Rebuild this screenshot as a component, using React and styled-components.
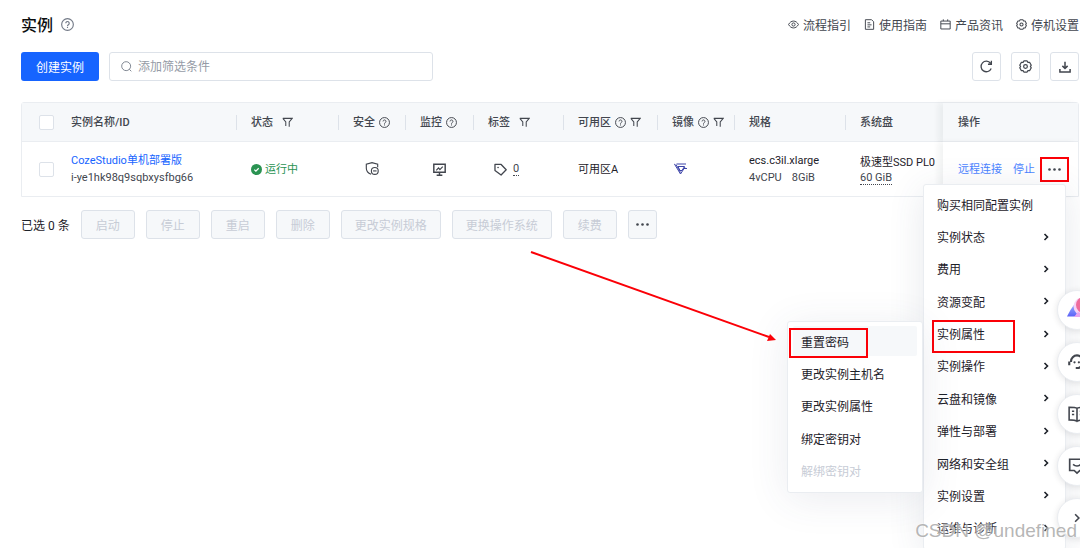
import React from "react";
import styled, { createGlobalStyle } from "styled-components";

const GlobalStyle = createGlobalStyle`
  * {
    box-sizing: border-box;
  }

  body {
    margin: 0;
    background: #fff;
  }

  body,
  button,
  input {
    font-family: Roboto, "Noto Sans CJK SC", sans-serif;
    font-size: 12px;
  }
`;

const Page = styled.div`
  position: relative;
  min-height: 100vh;
  padding: 10px 1px 0 21px;
  overflow: hidden;
  color: #1d2129;
`;

const TopBar = styled.header`
  display: flex;
  align-items: center;
  justify-content: space-between;
  height: 28px;
`;

const Title = styled.h1`
  display: flex;
  align-items: center;
  gap: 8px;
  margin: 0;
  font-size: 16px;
  font-weight: 500;
  color: #0c0d0e;

  svg {
    color: #737a87;
  }
`;

const TopLinks = styled.nav`
  display: flex;
  gap: 13px;
`;

const TopLink = styled.a`
  display: flex;
  align-items: center;
  gap: 4px;
  color: #42464e;
  text-decoration: none;
`;

const Toolbar = styled.div`
  display: flex;
  align-items: center;
  gap: 10px;
  margin: 14px 0 21px;
`;

const PrimaryButton = styled.button`
  height: 29px;
  padding: 0 15px 1px;
  border: 0;
  border-radius: 3px;
  background: #1664ff;
  color: #fff;
`;

const SearchBox = styled.label`
  display: flex;
  align-items: center;
  gap: 6px;
  flex: 0 1 324px;
  height: 29px;
  padding: 0 11px;
  border: 1px solid #dde2e9;
  border-radius: 3px;
  color: #737a87;

  input {
    flex: 1;
    min-width: 0;
    padding: 0;
    border: 0;
    outline: 0;
    background: none;
  }

  input::placeholder {
    color: #959ba6;
  }
`;

const ToolbarRight = styled.div`
  display: flex;
  gap: 10px;
  margin-left: auto;
`;

const IconButton = styled.button`
  display: flex;
  align-items: center;
  justify-content: center;
  width: 29px;
  height: 29px;
  padding: 0;
  border: 1px solid #dde2e9;
  border-radius: 3px;
  background: ${(p) => (p.$filled ? "#f6f8fa" : "#fff")};
  color: #42464e;
`;

const Table = styled.table`
  width: 100%;
  table-layout: fixed;
  border: 1px solid #eaedf1;
  border-radius: 3px 3px 0 0;
  border-spacing: 0;
  font-size: 11px;
  line-height: 17px;
`;

const Col = styled.col`
  width: ${(p) => p.$width}px;
`;

const Th = styled.th`
  position: relative;
  height: 39px;
  padding: 0 0 0 15px;
  border-bottom: 1px solid #eaedf1;
  background: #f6f8fa;
  color: #42464e;
  font-weight: 500;
  text-align: left;
  white-space: nowrap;

  &:nth-child(n + 3):not(:last-child)::before {
    content: "";
    position: absolute;
    left: 0;
    top: 12px;
    height: 15px;
    border-left: 1px solid #dde2e9;
  }

  &:first-child {
    padding-left: 17px;
  }

  &:last-child {
    box-shadow: -5px 0 6px rgba(29, 33, 41, 0.05);
  }
`;

const HeadLabel = styled.span`
  display: flex;
  align-items: center;
  gap: ${(p) => p.$gap || 4}px;
`;

const Td = styled.td`
  position: relative;
  height: 54px;
  padding: 0 0 0 15px;
  background: #fff;
  white-space: nowrap;

  &:first-child {
    padding-left: 17px;
  }

  &:last-child {
    box-shadow: -5px 0 6px rgba(29, 33, 41, 0.05);
  }
`;

const Checkbox = styled.input`
  display: block;
  appearance: none;
  width: 15px;
  height: 15px;
  margin: 0;
  border: 1px solid #dde2e9;
  border-radius: 2px;
  background: #fff;
`;

const Link = styled.a`
  color: #1664ff;
  text-decoration: none;
  opacity: ${(p) => (p.$soft ? 0.8 : 1)};
`;

const SubLine = styled.div`
  display: flex;
  gap: 10px;
  color: #42464e;
`;

const Dotted = styled.span`
  border-bottom: 1px dotted #42464e;
  line-height: 13px;
`;

const Status = styled.span`
  display: flex;
  align-items: center;
  gap: 3px;
  color: #2a9352;
`;

const Centered = styled.span`
  display: flex;
  align-items: center;
  gap: 6px;
  padding-left: ${(p) => p.$indent || 0}px;
  color: #42464e;
`;

const Actions = styled.div`
  display: flex;
  align-items: center;
  gap: 11px;
`;

const MoreButton = styled.button`
  display: flex;
  align-items: center;
  justify-content: center;
  width: 29px;
  height: 25px;
  margin-left: -6px;
  padding: 0;
  border: 2px solid #fb0007;
  background: none;
  color: #42464e;
`;

const BatchBar = styled.div`
  display: flex;
  align-items: center;
  gap: 11px;
  margin-top: 13px;
`;

const BatchLabel = styled.span`
  flex: 0 0 47px;
  padding-bottom: 1px;
  white-space: nowrap;
`;

const BatchButton = styled.button`
  min-width: 54px;
  height: 29px;
  padding: 0 13px 1px;
  border: 1px solid #dde2e9;
  border-radius: 3px;
  background: #f6f8fa;
  color: #c7ccd6;
`;

const Panel = styled.div`
  position: absolute;
  display: grid;
  grid-auto-rows: 1fr;
  padding: 3px 5px 5px;
  border: 1px solid #eaedf1;
  border-radius: 3px;
  background: #fff;
`;

const Menu = styled(Panel)`
  top: 184px;
  right: 14px;
  width: 143px;
  height: 366px;
  box-shadow: 0 6px 36px rgba(60, 72, 110, 0.12);
`;

const SubMenu = styled(Panel)`
  top: 136px;
  right: 100%;
  width: 136px;
  height: 172px;
  margin-right: 1px;
  box-shadow: 0 6px 40px rgba(60, 72, 110, 0.1);
`;

const MenuItem = styled.button`
  position: relative;
  display: flex;
  align-items: center;
  justify-content: space-between;
  min-height: 0;
  margin: 1px 0;
  padding: 0 10px 0 8px;
  border: 0;
  border-radius: 2px;
  background: ${(p) => (p.$hover ? "#f6f8fa" : "none")};
  color: #1d2129;
  text-align: left;
  white-space: nowrap;

  &:disabled {
    color: #c7ccd6;
  }
`;

const Highlight = styled.span`
  position: absolute;
  left: ${(p) => p.$left}px;
  top: 2px;
  width: ${(p) => p.$width}px;
  height: ${(p) => p.$height}px;
  border: 2px solid #fb0007;
`;

const Arrow = styled.svg`
  position: absolute;
  left: 530px;
  top: 250px;
`;

const Floats = styled.aside`
  position: absolute;
  top: 290px;
  right: -17px;
  display: grid;
  gap: 12px;
`;

const FloatButton = styled.button`
  display: flex;
  align-items: center;
  justify-content: center;
  width: 40px;
  height: 40px;
  padding: 0;
  border: 1px solid #eaedf1;
  border-radius: 50%;
  background: #fff;
  box-shadow: 0 1px 6px rgba(29, 33, 41, 0.12);
  color: #42464e;
`;

const Watermark = styled.div`
  position: absolute;
  right: 3px;
  bottom: 5px;
  font: 19px/24px "Liberation Sans", sans-serif;
  color: rgba(150, 150, 150, 0.7);
  text-shadow: 0 0 2px #fff;
  pointer-events: none;
`;

const Svg = ({ size = 12, width = 1.2, children }) => (
  <svg
    width={size}
    height={size}
    viewBox="0 0 16 16"
    fill="none"
    stroke="currentColor"
    strokeWidth={width}
    aria-hidden="true"
  >
    {children}
  </svg>
);

const HelpIcon = ({ size = 11 }) => (
  <Svg size={size} width={1.4}>
    <circle cx="8" cy="8" r="7.2" />
    <path d="M5.9 6.4a2.1 2.1 0 1 1 3.2 1.8c-.8.5-1.1.8-1.1 1.6M8 10.8v1.5" />
  </Svg>
);

const FilterIcon = () => (
  <Svg size={11} width={1.5}>
    <path d="M1.2 2h13.6l-4.300 5.200V14M1.2 2l4.300 5.200V13" />
  </Svg>
);

const EyeIcon = () => (
  <Svg size={11} width={1.4}>
    <path d="M.8 8C2.6 4.8 5 3 8 3s5.400 1.800 7.200 5c-1.800 3.200-4.200 5-7.200 5S2.600 11.200.8 8z" />
    <circle cx="8" cy="8" r="2.300" />
  </Svg>
);

const DocIcon = () => (
  <Svg size={11} width={1.4}>
    <path d="M2 1h9l3 3v11H2zM5 5.500h4M5 8.500h6M5 11.500h4" />
  </Svg>
);

const CalendarIcon = () => (
  <Svg size={11} width={1.4}>
    <path d="M1.200 3h13.600v11.500H1.200zM1.200 7h13.600M4.800.5V3M11.200.5V3" />
  </Svg>
);

const GearIcon = ({ size = 11 }) => (
  <Svg size={size} width={1.5}>
    <path
      strokeLinejoin="round"
      d="M6 1.200h4l1 1.700 2.200.1 1.900 3.400L14 8l1.100 1.600-1.900 3.400-2.200.1-1 1.700H6l-1-1.700-2.200-.1L.9 9.600 2 8 .9 6.400 2.800 3 5 2.900z"
    />
    <circle cx="8" cy="8" r="2.300" />
  </Svg>
);

const SearchIcon = () => (
  <Svg size={11} width={1.3}>
    <circle cx="7.500" cy="7.500" r="6.500" />
    <path d="M12 12l3 3" />
  </Svg>
);

const RefreshIcon = () => (
  <Svg size={13} width={1.6}>
    <path d="M13.800 10.500A6.500 6.500 0 1 1 13 4M14 1v4.200H9.800" />
  </Svg>
);

const DownloadIcon = () => (
  <Svg size={12} width={2}>
    <path d="M8 1v8.500M4.500 6.500L8 10l3.500-3.500M1.200 10.500v4h13.600v-4" />
  </Svg>
);

const DotsIcon = () => (
  <svg width="13" height="3" viewBox="0 0 13 3" fill="currentColor" aria-hidden="true">
    <circle cx="1.500" cy="1.500" r="1.300" />
    <circle cx="6.500" cy="1.500" r="1.300" />
    <circle cx="11.500" cy="1.500" r="1.300" />
  </svg>
);

const CheckIcon = () => (
  <svg width="11" height="11" viewBox="0 0 16 16" aria-hidden="true">
    <circle cx="8" cy="8" r="8" fill="#2a9352" />
    <path d="M4.800 8.200l2.300 2.200 4.100-4.200" fill="none" stroke="#fff" strokeWidth="1.8" />
  </svg>
);

const ShieldIcon = () => (
  <Svg size={14} width={1.3}>
    <path d="M7 14C3.500 12.500 1.500 10.500 1.500 7V2.500L8 .8l6.500 1.700V6" />
    <circle cx="11.200" cy="10.200" r="3.900" />
    <path d="M9.200 10.200h4" />
  </Svg>
);

const MonitorIcon = () => (
  <Svg size={13} width={1.8}>
    <path d="M1 1.500h14v10H1zM8 11.500V15M4.500 15h7" />
    <path strokeWidth="1.5" d="M4 9l2.800-3 1.700 2.200L12 4.500" />
  </Svg>
);

const TagIcon = () => (
  <Svg size={13} width={1.6}>
    <path strokeLinejoin="round" d="M1.200 1.800h7.600L15 8.300l-6.300 6.500-7.500-5.500z" />
    <circle cx="5" cy="5.500" r="1" fill="currentColor" stroke="none" />
  </Svg>
);

const ImageLogo = () => (
  <svg width="13" height="12" viewBox="0 0 13 12" fill="none" stroke="#3c44a8" aria-hidden="true">
    <path d="M2.500 1h9.500M.3.800L6.500 11 11 4M2 1.500l4.500 8M4 3.500h6.500L8 7.500H6L4 3.500M9.500 5.500H13" />
  </svg>
);

const ChevronIcon = ({ size = 8, width = 3.2 }) => (
  <Svg size={size} width={width}>
    <path d="M5 2l6 6-6 6" />
  </Svg>
);

const PrismIcon = () => (
  <svg width="24" height="24" viewBox="0 0 24 24" aria-hidden="true">
    <defs>
      <linearGradient id="prism" x1="0" y1="1" x2="0" y2="0">
        <stop offset="0" stopColor="#5c62f7" />
        <stop offset="1" stopColor="#9db8ff" />
      </linearGradient>
    </defs>
    <path d="M2 18.500h9L14 8l-3-3C9 6 4 14 2 18.500z" fill="url(#prism)" />
    <circle cx="17.500" cy="8.500" r="9" fill="#f7d3f5" />
    <circle cx="19" cy="7" r="8" fill="#ef6c9b" />
    <path d="M9 19l4-5 9 5z" fill="#e9a5ee" />
  </svg>
);

const HeadsetIcon = () => (
  <Svg size={20} width={1.7}>
    <path d="M3.200 8V7.500a4.800 4.800 0 0 1 9.600 0V8M1.800 7.500v3M14.200 7.500v3M7 12.800h2.500l3.300-2" />
    <circle cx="6" cy="8.200" r=".9" fill="currentColor" stroke="none" />
    <circle cx="9.500" cy="8.200" r=".9" fill="currentColor" stroke="none" />
  </Svg>
);

const BookIcon = () => (
  <Svg size={18} width={1.4}>
    <path d="M8 3C7 2.200 5 2 1 2v11.200c4 0 6 .3 7 1.300 1-1 3-1.300 7-1.300V2c-4 0-6 .2-7 1zM8 3v11.500M3.500 5.500h2M3.500 8.500h2M10.500 5.500h2M10.500 8.500h2" />
  </Svg>
);

const FeedbackIcon = () => (
  <Svg size={18} width={1.5}>
    <path d="M1.500 2h13v10h-4L8 14.300 5.500 12h-4zM4.500 6.500c2 1.800 5 1.800 7 0" />
  </Svg>
);

const columns = [
  { title: "状态", width: 102, filter: true, gap: 9 },
  { title: "安全", width: 67, help: true },
  { title: "监控", width: 68, help: true },
  { title: "标签", width: 90, filter: true, gap: 9 },
  { title: "可用区", width: 94, help: true, filter: true },
  { title: "镜像", width: 77, help: true, filter: true },
  { title: "规格", width: 111 },
  { title: "系统盘", width: 98 },
  { title: "操作", width: 135 },
];

const batchActions = ["启动", "停止", "重启", "删除", "更改实例规格", "更换操作系统", "续费"];

const menuItems = [
  "实例状态",
  "费用",
  "资源变配",
  "实例属性",
  "实例操作",
  "云盘和镜像",
  "弹性与部署",
  "网络和安全组",
  "实例设置",
  "运维与诊断",
];

function InstanceTable() {
  return (
    <Table>
      <colgroup>
        <Col $width={34} />
        <col />
        {columns.map((c) => (
          <Col key={c.title} $width={c.width} />
        ))}
      </colgroup>
      <thead>
        <tr>
          <Th>
            <Checkbox type="checkbox" aria-label="全选" />
          </Th>
          <Th>实例名称/ID</Th>
          {columns.map((c) => (
            <Th key={c.title}>
              <HeadLabel $gap={c.gap}>
                {c.title}
                {c.help && <HelpIcon />}
                {c.filter && <FilterIcon />}
              </HeadLabel>
            </Th>
          ))}
        </tr>
      </thead>
      <tbody>
        <tr>
          <Td>
            <Checkbox type="checkbox" aria-label="CozeStudio单机部署版" />
          </Td>
          <Td>
            <Link href="#instance">CozeStudio单机部署版</Link>
            <SubLine>i-ye1hk98q9sqbxysfbg66</SubLine>
          </Td>
          <Td>
            <Status>
              <CheckIcon />
              运行中
            </Status>
          </Td>
          <Td>
            <Centered $indent={12}>
              <ShieldIcon />
            </Centered>
          </Td>
          <Td>
            <Centered $indent={13}>
              <MonitorIcon />
            </Centered>
          </Td>
          <Td>
            <Centered $indent={6}>
              <TagIcon />
              <Dotted>0</Dotted>
            </Centered>
          </Td>
          <Td>可用区A</Td>
          <Td>
            <Centered $indent={2}>
              <ImageLogo />
            </Centered>
          </Td>
          <Td>
            ecs.c3il.xlarge
            <SubLine>
              <span>4vCPU</span>
              <span>8GiB</span>
            </SubLine>
          </Td>
          <Td>
            极速型SSD PL0
            <SubLine>
              <Dotted>60 GiB</Dotted>
            </SubLine>
          </Td>
          <Td>
            <Actions>
              <Link href="#connect" $soft>
                远程连接
              </Link>
              <Link href="#stop" $soft>
                停止
              </Link>
              <MoreButton aria-label="更多">
                <DotsIcon />
              </MoreButton>
            </Actions>
          </Td>
        </tr>
      </tbody>
    </Table>
  );
}

function ActionMenu() {
  return (
    <Menu>
      <MenuItem>购买相同配置实例</MenuItem>
      {menuItems.map((item) => (
        <MenuItem key={item}>
          {item}
          <ChevronIcon />
          {item === "实例属性" && <Highlight $left={3} $width={83} $height={33} />}
        </MenuItem>
      ))}
      <SubMenu>
        <MenuItem $hover>
          重置密码
          <Highlight $left={-4} $width={79} $height={30} />
        </MenuItem>
        <MenuItem>更改实例主机名</MenuItem>
        <MenuItem>更改实例属性</MenuItem>
        <MenuItem>绑定密钥对</MenuItem>
        <MenuItem disabled>解绑密钥对</MenuItem>
      </SubMenu>
    </Menu>
  );
}

function App() {
  return (
    <Page>
      <GlobalStyle />
      <TopBar>
        <Title>
          实例
          <HelpIcon size={13} />
        </Title>
        <TopLinks>
          <TopLink href="#flow">
            <EyeIcon />
            流程指引
          </TopLink>
          <TopLink href="#guide">
            <DocIcon />
            使用指南
          </TopLink>
          <TopLink href="#news">
            <CalendarIcon />
            产品资讯
          </TopLink>
          <TopLink href="#shutdown">
            <GearIcon />
            停机设置
          </TopLink>
        </TopLinks>
      </TopBar>
      <Toolbar>
        <PrimaryButton>创建实例</PrimaryButton>
        <SearchBox>
          <SearchIcon />
          <input type="text" placeholder="添加筛选条件" />
        </SearchBox>
        <ToolbarRight>
          <IconButton aria-label="刷新">
            <RefreshIcon />
          </IconButton>
          <IconButton aria-label="设置">
            <GearIcon size={13} />
          </IconButton>
          <IconButton aria-label="下载">
            <DownloadIcon />
          </IconButton>
        </ToolbarRight>
      </Toolbar>
      <InstanceTable />
      <BatchBar>
        <BatchLabel>已选 0 条</BatchLabel>
        {batchActions.map((name) => (
          <BatchButton key={name} disabled>
            {name}
          </BatchButton>
        ))}
        <IconButton $filled aria-label="更多操作">
          <DotsIcon />
        </IconButton>
      </BatchBar>
      <ActionMenu />
      <Arrow width="248" height="94" viewBox="0 0 248 94" aria-hidden="true">
        <path d="M1 2l238 85" stroke="#fb0007" strokeWidth="2" />
        <path d="M246 90l-9 1 3-7z" fill="#fb0007" />
      </Arrow>
      <Floats>
        <FloatButton aria-label="助手">
          <PrismIcon />
        </FloatButton>
        <FloatButton aria-label="客服">
          <HeadsetIcon />
        </FloatButton>
        <FloatButton aria-label="文档">
          <BookIcon />
        </FloatButton>
        <FloatButton aria-label="反馈">
          <FeedbackIcon />
        </FloatButton>
        <FloatButton aria-label="收起">
          <ChevronIcon size={10} width={2.6} />
        </FloatButton>
      </Floats>
      <Watermark>CSDN @undefined</Watermark>
    </Page>
  );
}

export default App;
